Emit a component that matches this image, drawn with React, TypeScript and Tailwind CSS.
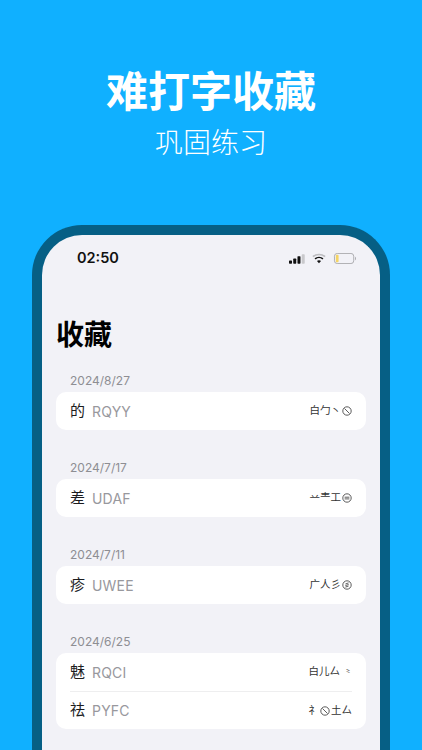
import React from 'react';

const CJK = { fontFamily: '"Inter", "Noto Sans CJK SC", sans-serif' };

// circled stroke mark used at the end of a code hint
const Mark: React.FC<{ kind: 'slash' | 'bar' | 'lines' }> = ({ kind }) => (
  <svg width="10" height="10" viewBox="0 0 10 10" fill="none" stroke="#333" strokeWidth="0.8" className="shrink-0">
    <circle cx="5" cy="5" r="4.2" />
    {kind === 'slash' && <path d="M2.6 2.6 7.4 7.4" />}
    {kind === 'bar' && <path d="M2.6 4.2h4.8M2.6 5.9h4.8" />}
    {kind === 'lines' && <path d="M6.6 2.9 3.4 4M6.6 4.5 3.4 5.6M6.6 6 3.4 7.1" />}
  </svg>
);

interface Row {
  char: string;
  code: string;
  roots: string;
  mark?: 'slash' | 'bar' | 'lines';
  tail?: string;
  after?: string;
}

const groups: { date: string; rows: Row[] }[] = [
  { date: '2024/8/27', rows: [{ char: '的', code: 'RQYY', roots: '白勹丶', mark: 'slash' }] },
  { date: '2024/7/17', rows: [{ char: '差', code: 'UDAF', roots: '䒑龶工', mark: 'bar' }] },
  { date: '2024/7/11', rows: [{ char: '疹', code: 'UWEE', roots: '广人彡', mark: 'lines' }] },
  {
    date: '2024/6/25',
    rows: [
      { char: '魅', code: 'RQCI', roots: '白儿厶', tail: '⺀' },
      { char: '祛', code: 'PYFC', roots: '礻', mark: 'slash', after: '土厶' },
    ],
  },
];

const SignalIcon = () => (
  <svg width="16" height="10" viewBox="0 0 17 10" fill="#111">
    <rect x="0" y="6.5" width="3.2" height="3.5" rx="0.7" />
    <rect x="4.5" y="4.5" width="3.2" height="5.5" rx="0.7" />
    <rect x="9" y="2" width="3.2" height="8" rx="0.7" />
    <rect x="13.5" y="0" width="3.2" height="10" rx="0.7" fill="#c9c9cc" />
  </svg>
);

const WifiIcon = () => (
  <svg width="14" height="11" viewBox="0 0 15 11" fill="none">
    <path d="M1 3.6C4.6.4 10.4.4 14 3.6" stroke="#bdbdc0" strokeWidth="1.8" />
    <path d="M3.3 5.9c2.4-2 6-2 8.4 0" stroke="#111" strokeWidth="1.8" />
    <path d="M7.5 10.6 5.3 8.1c1.3-.9 3.1-.9 4.4 0z" fill="#111" />
  </svg>
);

const BatteryIcon = () => (
  <svg width="24" height="11" viewBox="0 0 24 12" fill="none">
    <rect x="0.5" y="0.5" width="21" height="11" rx="3" stroke="#a9a9ac" />
    <rect x="2" y="2" width="3" height="8" rx="1" fill="#f5d565" />
    <path d="M23 4v4c.7-.3 1-1.1 1-2s-.3-1.700-1-2z" fill="#a9a9ac" />
  </svg>
);

export default function App() {
  return (
    <div className="flex h-[750px] w-[422px] flex-col overflow-hidden bg-[#10b0ff]" style={CJK}>
      <div className="flex h-[225px] flex-col items-center pt-[62px] text-white">
        <h1 className="text-[42px] leading-[60px] font-bold">难打字收藏</h1>
        <p className="mt-[1px] text-[28px] leading-[40px] font-light">巩固练习</p>
      </div>

      <div className="mx-[32px] flex-1 rounded-t-[50px] border-x-[10px] border-t-[10px] border-[#065f85] bg-[#f2f2f7]">
        <div className="flex h-[33px] items-end justify-between pr-[23px] pl-[35px]">
          <span className="text-[14.5px] leading-[20px] font-semibold text-[#111]">02:50</span>
          <div className="flex items-center gap-[7px] pb-[4px]">
            <SignalIcon />
            <WifiIcon />
            <BatteryIcon />
          </div>
        </div>

        <h2 className="mt-[47px] pl-[14px] text-[28px] leading-[40px] font-bold text-black">收藏</h2>

        <div className="mt-[17px] flex flex-col gap-[29px] px-[14px]">
          {groups.map((group) => (
            <section key={group.date}>
              <div className="h-[18px] pl-[14px] text-[12px] leading-[18px] text-[#8e8e93]">{group.date}</div>
              <div className="mt-[2px] rounded-[10px] bg-white">
                {group.rows.map((row, i) => (
                  <div
                    key={row.code}
                    className={`mx-[14px] flex h-[38px] items-center ${i > 0 ? 'border-t border-[#eeeeef]' : ''}`}
                  >
                    <span className="w-[22px] text-[15px] text-[#1c1c1e]">{row.char}</span>
                    <span className="text-[14px] tracking-[0.2px] text-[#98989d]">{row.code}</span>
                    <span className="ml-auto flex items-center gap-[1px] text-[10.5px] text-[#333]">
                      <span>{row.roots}</span>
                      {row.mark && <Mark kind={row.mark} />}
                      {row.after && <span>{row.after}</span>}
                      {row.tail && <span className="ml-[3px] w-[8px] text-[8px]">{row.tail}</span>}
                    </span>
                  </div>
                ))}
              </div>
            </section>
          ))}
        </div>
      </div>
    </div>
  );
}
